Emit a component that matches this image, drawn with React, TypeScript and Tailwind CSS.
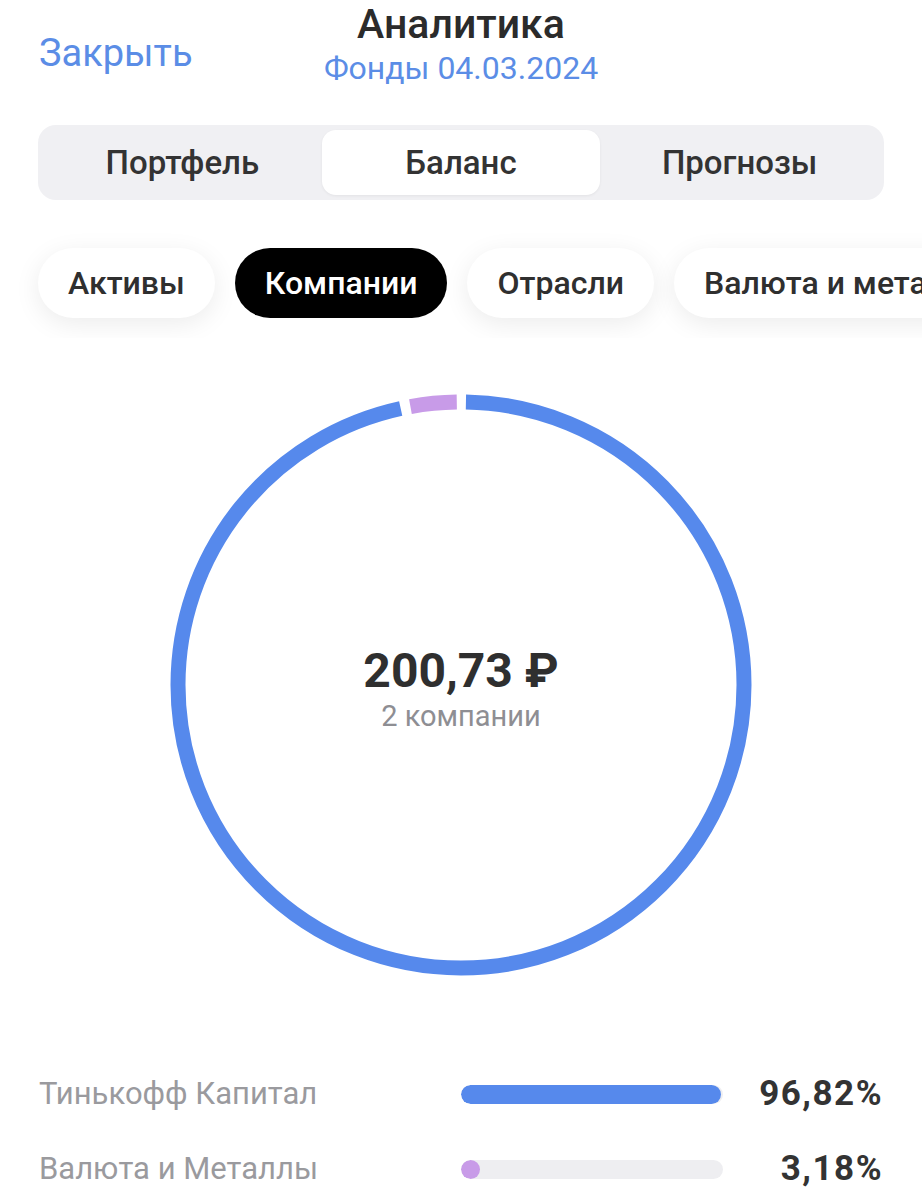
import React from "react";

const R = 283;
const C = 2 * Math.PI * R;
const GAP = 10;

const segments = [
  { name: "Тинькофф Капитал", share: 96.82, color: "#5689ec" },
  { name: "Валюта и Металлы", share: 3.18, color: "#c89be8" },
];

const tabs = ["Портфель", "Баланс", "Прогнозы"];
const chips = ["Активы", "Компании", "Отрасли", "Валюта и металлы"];

function Donut() {
  let offset = GAP / 2;
  return (
    <svg width="582" height="582" viewBox="0 0 582 582">
      <g transform="rotate(-90 291 291)">
        {segments.map((s) => {
          const len = (s.share / 100) * C - GAP;
          const el = (
            <circle
              key={s.name}
              cx="291"
              cy="291"
              r={R}
              fill="none"
              stroke={s.color}
              strokeWidth="15"
              strokeDasharray={`${len} ${C}`}
              strokeDashoffset={-offset}
            />
          );
          offset += len + GAP;
          return el;
        })}
      </g>
    </svg>
  );
}

export default function App() {
  return (
    <div className="w-[922px] h-[1200px] overflow-hidden bg-white font-['Roboto',sans-serif] text-[#2f2f2f]">
      {/* header */}
      <div className="grid grid-cols-[1fr_auto_1fr] items-start px-[39px] h-[100px]">
        <div className="text-[38px] text-[#5b8de6] leading-none mt-[34px]">Закрыть</div>
        <div className="flex flex-col items-center">
          <div className="text-[41px] font-medium leading-[48px] text-[#2b2b2b]">Аналитика</div>
          <div className="text-[32px] text-[#5b8de6] leading-[38px] mt-[1px]">Фонды 04.03.2024</div>
        </div>
        <div />
      </div>

      {/* segmented control */}
      <div className="mx-[38px] mt-[25px] rounded-[18px] bg-[#f0f0f3] p-[5px] grid grid-cols-3 h-[75px]">
        {tabs.map((t) => (
          <div
            key={t}
            className={`flex items-center justify-center rounded-[14px] text-[33px] font-medium text-[#333] ${
              t === "Баланс" ? "bg-white shadow-[0_1px_3px_rgba(0,0,0,0.06)]" : ""
            }`}
          >
            {t}
          </div>
        ))}
      </div>

      {/* chips */}
      <div className="flex gap-5 pl-[38px] mt-[28px] py-[20px] -my-[20px] overflow-hidden">
        {chips.map((c) => (
          <div
            key={c}
            className={`shrink-0 h-[70px] px-[30px] flex items-center rounded-full text-[32px] font-medium whitespace-nowrap ${
              c === "Компании"
                ? "bg-black text-white"
                : "bg-white text-[#2f2f2f] shadow-[0_6px_26px_rgba(0,0,0,0.08)]"
            }`}
          >
            {c}
          </div>
        ))}
      </div>

      {/* donut */}
      <div className="relative flex justify-center mt-[76px]">
        <Donut />
        <div className="absolute inset-0 flex flex-col items-center justify-center mt-[6px]">
          <div className="text-[48px] font-bold leading-[56px] text-[#2f2f2f]">200,73 ₽</div>
          <div className="text-[29px] leading-[34px] text-[#8e8e93]">2 компании</div>
        </div>
      </div>

      {/* legend */}
      <div className="px-[39px] mt-[101px] flex flex-col gap-[40px]">
        {segments.map((s) => (
          <div key={s.name} className="flex items-center h-[35px]">
            <div className="w-[422px] text-[31px] text-[#9a9a9e]">{s.name}</div>
            <div className="w-[262px] h-[19px] rounded-full bg-[#eeeef1] overflow-hidden">
              <div
                className="h-full rounded-full"
                style={{ width: `max(19px, ${Math.min(100, s.share + 2.5)}%)`, backgroundColor: s.color }}
              />
            </div>
            <div className="flex-1 text-right text-[35px] font-bold tracking-[1.5px] text-[#333]">
              {s.share.toFixed(2).replace(".", ",")}%
            </div>
          </div>
        ))}
      </div>
    </div>
  );
}
